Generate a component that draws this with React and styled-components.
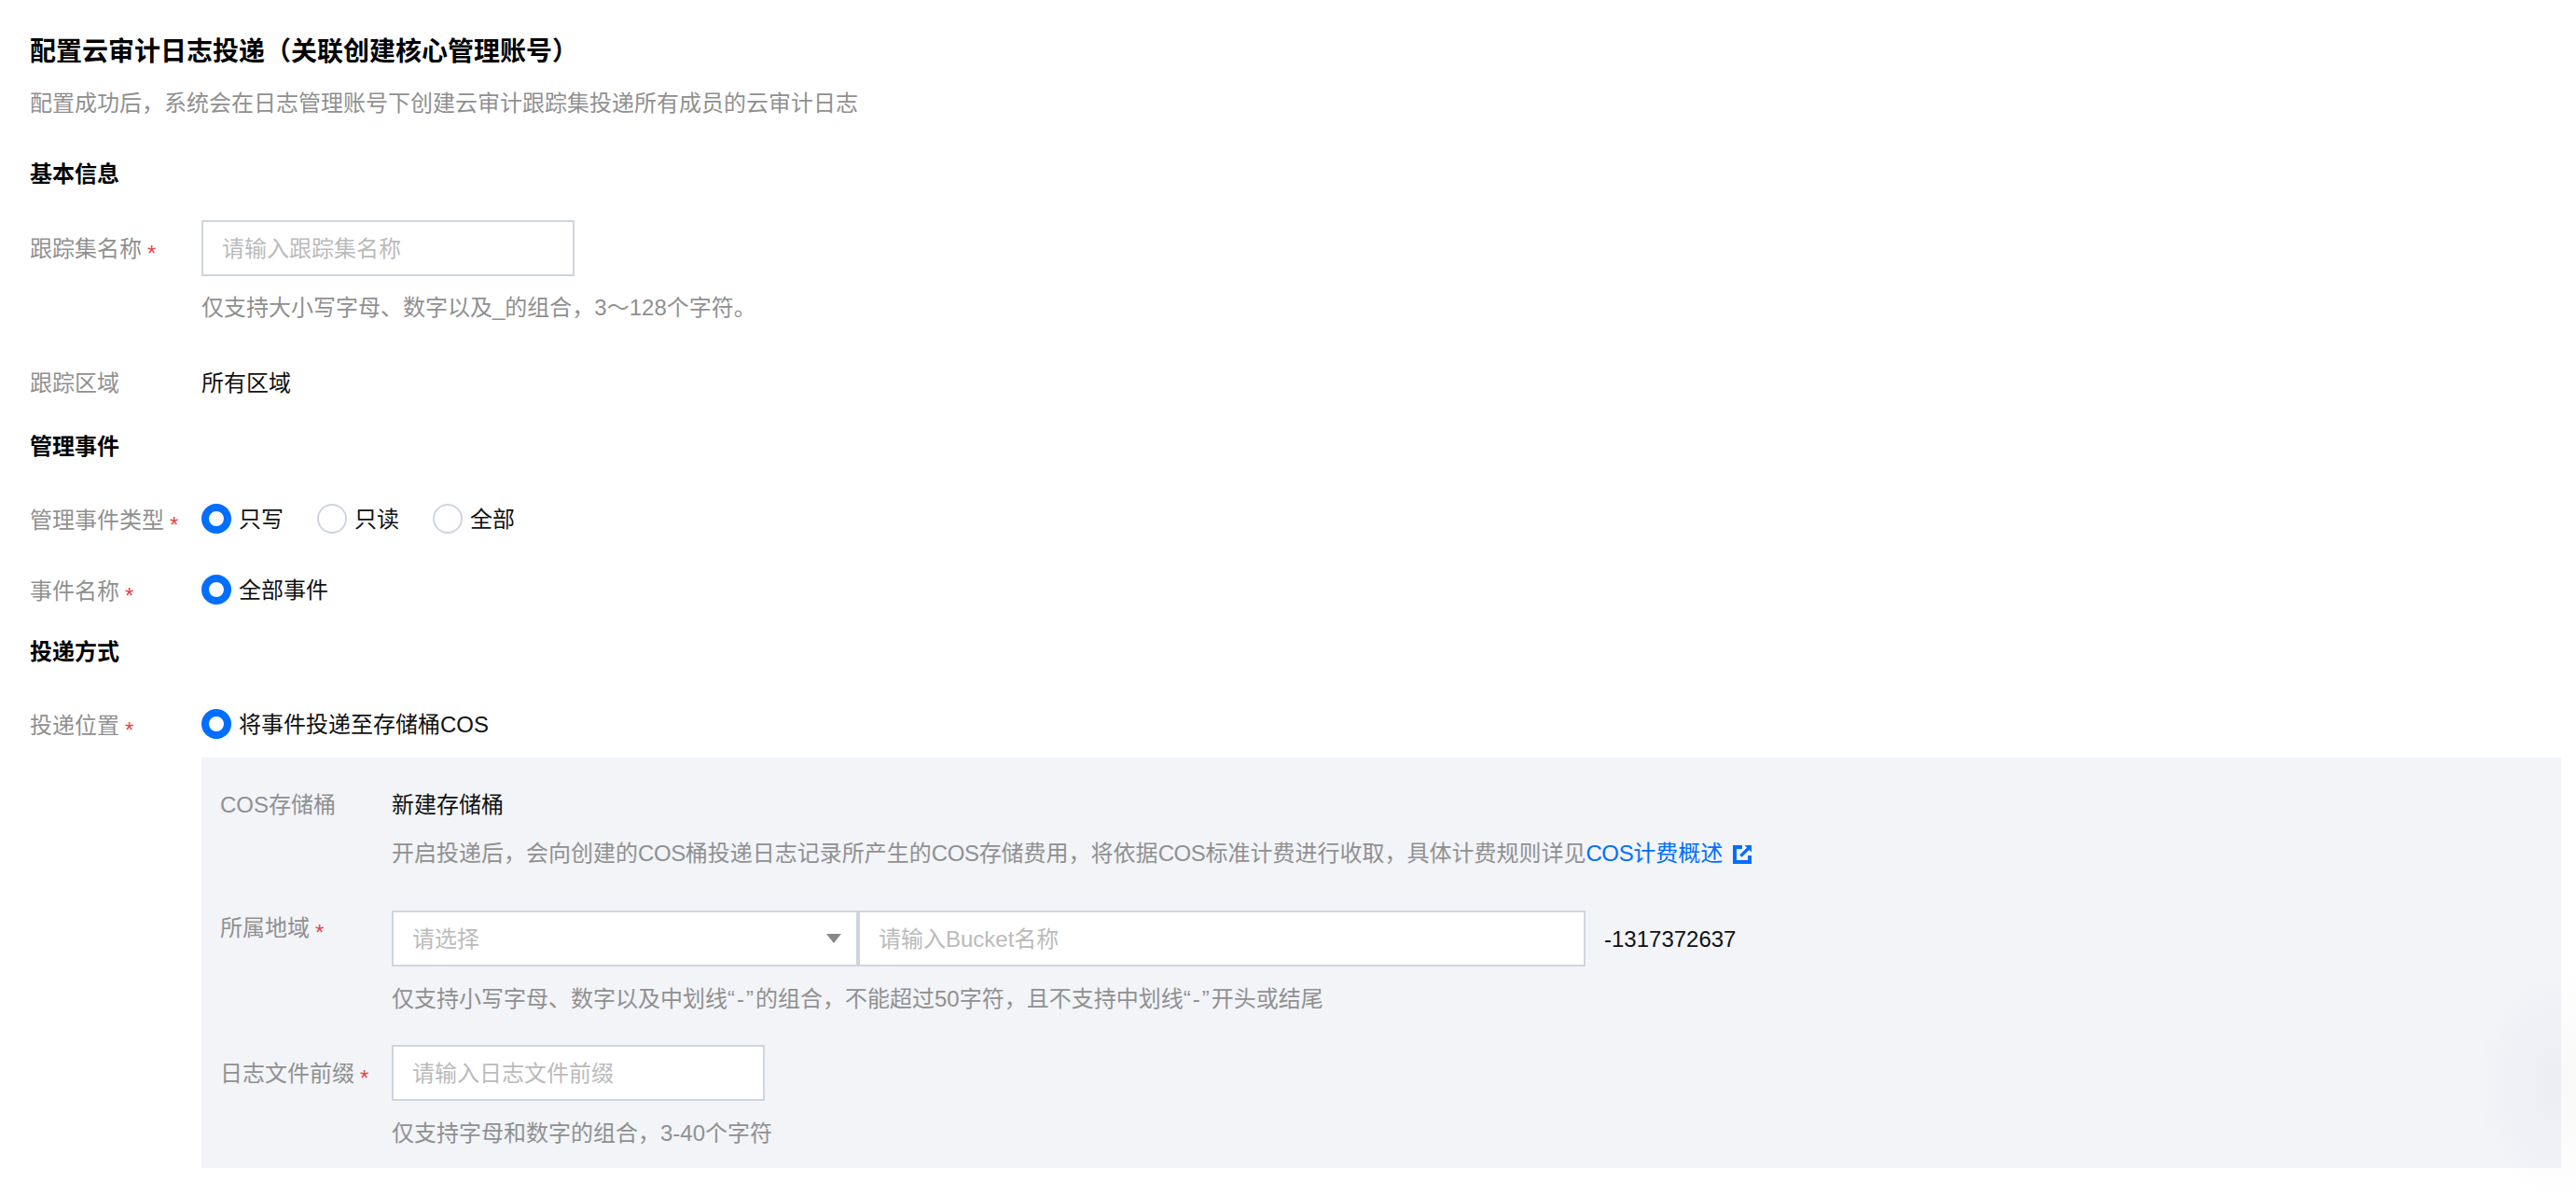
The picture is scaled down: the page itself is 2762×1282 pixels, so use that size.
import React from "react";
import styled, { createGlobalStyle } from "styled-components";

const GlobalStyle = createGlobalStyle`
  html, body {
    margin: 0;
    padding: 0;
    background: #fff;
  }
  body {
    font-family: "Liberation Sans", "Noto Sans CJK SC", sans-serif;
    font-size: 24px;
    color: #000;
  }
`;

const Page = styled.div`
  position: relative;
  box-sizing: border-box;
  height: 1282px;
  overflow: hidden;
  padding: 36px 16px 0 32px;
`;

const CornerShade = styled.div`
  position: absolute;
  right: 0;
  bottom: 0;
  width: 110px;
  height: 240px;
  pointer-events: none;
  background: radial-gradient(
    ellipse 90px 130px at 90px 120px,
    rgba(30, 30, 70, 0.03),
    rgba(30, 30, 70, 0) 100%
  );
`;

const Title = styled.h1`
  margin: 0;
  font-size: 28px;
  line-height: 40px;
  font-weight: 600;
  color: #000;
`;

const Subtitle = styled.p`
  margin: 17px 0 0;
  line-height: 36px;
  color: #909090;
`;

const SectionTitle = styled.h2`
  margin: ${(p) => p.$top}px 0 0;
  font-size: 24px;
  line-height: 36px;
  font-weight: 600;
  color: #000;
`;

const Field = styled.div`
  display: grid;
  grid-template-columns: 184px 1fr;
  margin-top: ${(p) => p.$top}px;
`;

const Label = styled.label`
  display: block;
  line-height: 36px;
  padding-top: ${(p) => p.$offset || 0}px;
  color: #909090;
  white-space: nowrap;
`;

const Star = styled.span`
  display: inline-block;
  margin-left: 6px;
  font-size: 24px;
  line-height: 24px;
  color: #e54545;
  vertical-align: -5px;
`;

const Control = styled.div`
  min-width: 0;
`;

const Hint = styled.p`
  margin: ${(p) => p.$top}px 0 0;
  line-height: 36px;
  color: #909090;
  white-space: nowrap;
`;

const Narrow = styled.span`
  letter-spacing: -0.4px;
`;

const Dashed = styled.span`
  letter-spacing: 2px;
`;

const Value = styled.div`
  line-height: 36px;
  color: #111;
`;

const TextInput = styled.input`
  display: block;
  box-sizing: border-box;
  width: ${(p) => p.$width}px;
  height: 60px;
  padding: 2px 20px 0;
  border: 2px solid #cfd5de;
  border-radius: 0;
  outline: none;
  background: #fff;
  font: inherit;
  color: #000;
  &::placeholder {
    color: #bbb;
    opacity: 1;
  }
`;

const InputRow = styled.div`
  display: flex;
  align-items: center;
`;

const SelectBox = styled.div`
  display: flex;
  align-items: center;
  justify-content: space-between;
  box-sizing: border-box;
  width: 500px;
  height: 60px;
  padding: 2px 16px 0 20px;
  border: 2px solid #cfd5de;
  background: #fff;
  color: #bbb;
  line-height: 28px;
`;

const Caret = styled.span`
  width: 0;
  height: 0;
  margin-top: -2px;
  border-left: 8px solid transparent;
  border-right: 8px solid transparent;
  border-top: 10px solid #888;
`;

const Suffix = styled.span`
  margin-left: 20px;
  padding-top: 2px;
  color: #111;
`;

const RadioGroup = styled.div`
  display: flex;
  align-items: center;
  gap: 36px;
  height: 36px;
`;

const RadioItem = styled.div`
  display: flex;
  align-items: center;
  gap: 8px;
  line-height: 36px;
  color: #111;
`;

const RadioText = styled.span`
  padding-top: 2px;
`;

const RadioMark = styled.span`
  box-sizing: border-box;
  width: 32px;
  height: 32px;
  border-radius: 50%;
  background: #fff;
  border: ${(p) => (p.$checked ? "8px solid #006eff" : "2px solid #cfd5de")};
`;

const Panel = styled.div`
  margin: 16px 0 0 184px;
  padding: 33px 20px 19px;
  background: #f2f4f8;
`;

const DocLink = styled.a`
  color: #006eff;
  text-decoration: none;
`;

const ExternalIcon = styled.svg`
  width: 20px;
  height: 20px;
  margin-left: 11px;
  vertical-align: -3px;
`;

const Radio = ({ checked, children }) => (
  <RadioItem>
    <RadioMark $checked={checked} />
    <RadioText>{children}</RadioText>
  </RadioItem>
);

const App = () => {
  return (
    <>
      <GlobalStyle />
      <Page>
        <Title>配置云审计日志投递（关联创建核心管理账号）</Title>
        <Subtitle>配置成功后，系统会在日志管理账号下创建云审计跟踪集投递所有成员的云审计日志</Subtitle>

        <SectionTitle $top={40}>基本信息</SectionTitle>
        <Field $top={31}>
          <Label $offset={13}>
            跟踪集名称<Star>*</Star>
          </Label>
          <Control>
            <TextInput $width={400} placeholder="请输入跟踪集名称" />
            <Hint $top={16}>仅支持大小写字母、数字以及_的组合，3～128个字符。</Hint>
          </Control>
        </Field>
        <Field $top={45}>
          <Label>跟踪区域</Label>
          <Value>所有区域</Value>
        </Field>

        <SectionTitle $top={32}>管理事件</SectionTitle>
        <Field $top={41}>
          <Label $offset={2}>
            管理事件类型<Star>*</Star>
          </Label>
          <RadioGroup>
            <Radio checked>只写</Radio>
            <Radio>只读</Radio>
            <Radio>全部</Radio>
          </RadioGroup>
        </Field>
        <Field $top={38}>
          <Label $offset={2}>
            事件名称<Star>*</Star>
          </Label>
          <RadioGroup>
            <Radio checked>全部事件</Radio>
          </RadioGroup>
        </Field>

        <SectionTitle $top={29}>投递方式</SectionTitle>
        <Field $top={41}>
          <Label $offset={2}>
            投递位置<Star>*</Star>
          </Label>
          <RadioGroup>
            <Radio checked>将事件投递至存储桶COS</Radio>
          </RadioGroup>
        </Field>

        <Panel>
          <Field $top={0}>
            <Label>COS存储桶</Label>
            <Control>
              <Value>新建存储桶</Value>
              <Hint $top={16}>
                开启投递后，会向创建的<Narrow>COS</Narrow>桶投递日志记录所产生的<Narrow>COS</Narrow>存储费用，将依据
                <Narrow>COS</Narrow>标准计费进行收取，具体计费规则详见
                <DocLink href="#">
                  <Narrow>COS</Narrow>计费概述
                  <ExternalIcon viewBox="0 0 20 20">
                    <path fill="#006eff" fillRule="evenodd" d="M0 0h20v20H0V0zm4 4v12h12V4H4z" />
                    <path fill="#fff" d="M10 0h10v11h-4V8l-5-4h-1V0z" />
                    <path fill="#006eff" d="M12.500 0H20v7.500l-2.600-2.600-7.900 7.900-2.300-2.300 7.900-7.900L12.500 0z" />
                  </ExternalIcon>
                </DocLink>
              </Hint>
            </Control>
          </Field>
          <Field $top={43}>
            <Label $offset={1}>
              所属地域<Star>*</Star>
            </Label>
            <Control>
              <InputRow>
                <SelectBox>
                  请选择
                  <Caret />
                </SelectBox>
                <TextInput $width={780} placeholder="请输入Bucket名称" />
                <Suffix>-1317372637</Suffix>
              </InputRow>
              <Hint $top={17}>
                仅支持小写字母、数字以及中划线<Dashed>“-”</Dashed>的组合，不能超过50字符，且不支持中划线<Dashed>“-”</Dashed>开头或结尾
              </Hint>
            </Control>
          </Field>
          <Field $top={31}>
            <Label $offset={13}>
              日志文件前缀<Star>*</Star>
            </Label>
            <Control>
              <TextInput $width={400} placeholder="请输入日志文件前缀" />
              <Hint $top={17}>仅支持字母和数字的组合，3-40个字符</Hint>
            </Control>
          </Field>
        </Panel>
        <CornerShade />
      </Page>
    </>
  );
};

export default App;
